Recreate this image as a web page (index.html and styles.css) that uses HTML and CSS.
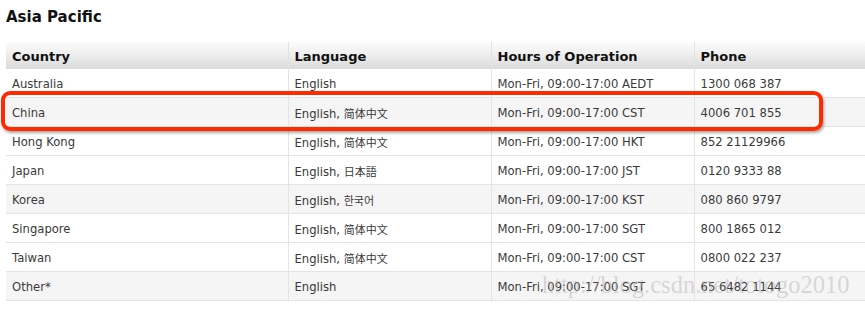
FILE: index.html
```html
<!DOCTYPE html>
<html>
<head>
<meta charset="utf-8">
<link rel="stylesheet" href="styles.css">
</head>
<body>
<div class="page">
  <h2 class="title">Asia Pacific</h2>
  <table class="contacts">
    <thead>
      <tr><th class="c1">Country</th><th class="c2">Language</th><th class="c3">Hours of Operation</th><th class="c4">Phone</th></tr>
    </thead>
    <tbody>
      <tr><td>Australia</td><td>English</td><td>Mon-Fri, 09:00-17:00 AEDT</td><td>1300 068 387</td></tr>
      <tr class="alt"><td>China</td><td>English, <span class="sc">简体中文</span></td><td>Mon-Fri, 09:00-17:00 CST</td><td>4006 701 855</td></tr>
      <tr><td>Hong Kong</td><td>English, <span class="sc">简体中文</span></td><td>Mon-Fri, 09:00-17:00 HKT</td><td>852 21129966</td></tr>
      <tr><td>Japan</td><td>English, <span class="jp">日本語</span></td><td>Mon-Fri, 09:00-17:00 JST</td><td>0120 9333 88</td></tr>
      <tr class="alt"><td>Korea</td><td>English, <span class="kr">한국어</span></td><td>Mon-Fri, 09:00-17:00 KST</td><td>080 860 9797</td></tr>
      <tr><td>Singapore</td><td>English, <span class="sc">简体中文</span></td><td>Mon-Fri, 09:00-17:00 SGT</td><td>800 1865 012</td></tr>
      <tr><td>Taiwan</td><td>English, <span class="sc">简体中文</span></td><td>Mon-Fri, 09:00-17:00 CST</td><td>0800 022 237</td></tr>
      <tr class="alt"><td>Other*</td><td>English</td><td>Mon-Fri, 09:00-17:00 SGT</td><td>65 6482 1144</td></tr>
    </tbody>
  </table>
  <div class="highlight"></div>
  <div class="watermark">http://blog.csdn.net/totogo2010</div>
</div>
</body>
</html>
```
FILE: styles.css
```css
html, body {
  margin: 0;
  padding: 0;
  background: #ffffff;
}
.page {
  position: relative;
  width: 865px;
  height: 311px;
  overflow: hidden;
  font-family: "DejaVu Sans", "Noto Sans CJK SC", sans-serif;
}
.title {
  margin: 7px 0 0 6px;
  font-size: 15px;
  line-height: 20px;
  font-weight: bold;
  color: #111111;
}
.contacts {
  margin: 15px 0 0 6px;
  border-collapse: collapse;
  table-layout: fixed;
  width: 859px;
}
.c1 { width: 282px; }
.c2 { width: 203px; }
.c3 { width: 203px; }
.c4 { width: 171px; }
.contacts th {
  height: 27px;
  padding: 2px 0 0 6px;
  text-align: left;
  font-size: 13px;
  font-weight: bold;
  color: #111111;
  background: linear-gradient(#fbfbfb, #f0f0f0 40%, #dadada);
  border-left: 1px solid #e2e2e2;
  vertical-align: middle;
  box-sizing: border-box;
}
.contacts th:first-child { border-left: none; }
.contacts td {
  height: 26px;
  padding: 2px 0 0 6px;
  font-size: 11.6px;
  color: #3a3a3a;
  border-bottom: 1px solid #e4e4e4;
  border-left: 1px solid #e4e4e4;
  white-space: nowrap;
  vertical-align: middle;
}
.contacts td:first-child { border-left: none; }
.contacts tr.alt td { background: #f5f5f5; }
.sc { font-family: "Noto Sans CJK SC", sans-serif; font-size: 11px; }
.jp { font-family: "Noto Sans CJK JP", sans-serif; font-size: 11px; }
.kr { font-family: "Noto Sans CJK KR", sans-serif; font-size: 11px; }
.highlight {
  position: absolute;
  left: 1px;
  top: 91px;
  width: 822px;
  height: 40px;
  box-sizing: border-box;
  border: 4px solid #ff2a00;
  border-radius: 9px;
  box-shadow: 1px 2px 3px rgba(0, 0, 0, 0.35);
}
.watermark {
  position: absolute;
  left: 542px;
  top: 271px;
  font-family: "Liberation Serif", serif;
  font-size: 24.5px;
  line-height: 28px;
  color: rgba(175, 175, 175, 0.45);
  white-space: nowrap;
}
```
